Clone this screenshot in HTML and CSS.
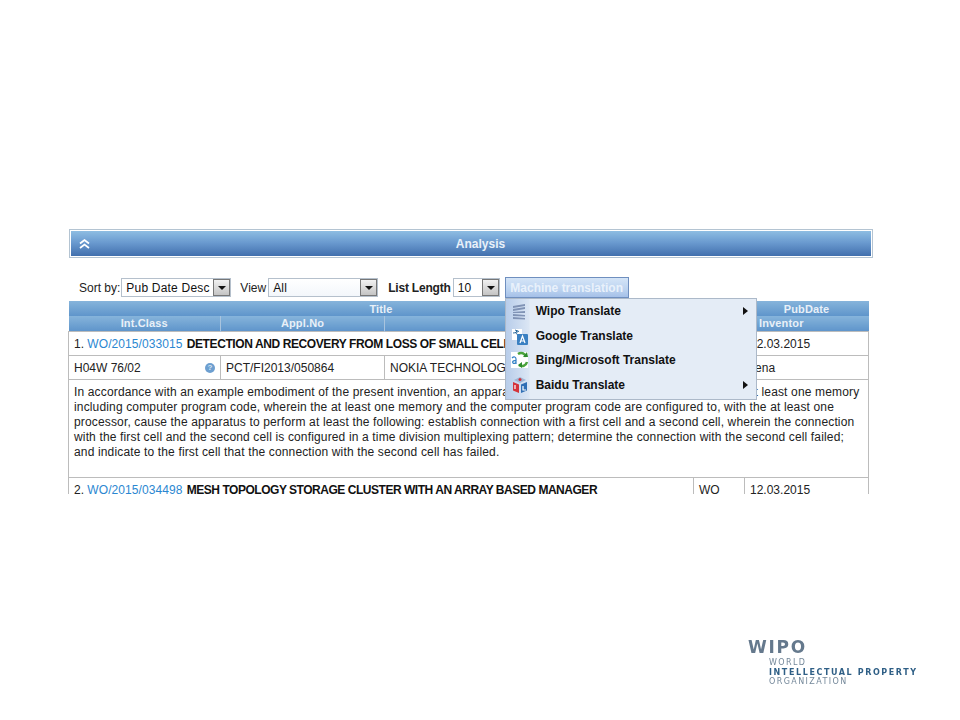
FILE: index.html
```html
<!DOCTYPE html>
<html lang="en">
<head>
<meta charset="utf-8">
<title>Analysis</title>
<link rel="stylesheet" href="styles.css">
</head>
<body>
<div class="slide">
  <section class="panel">
    <div class="panel-bar">
      <svg class="chev" width="11" height="10" viewBox="0 0 11 10"><path d="M1 4.500 5.500 1 10 4.500M1 9 5.500 5.500 10 9" fill="none" stroke="#fff" stroke-width="1.700"/></svg>
      <span class="panel-title">Analysis</span>
    </div>
  </section>

  <div class="toolbar">
    <label class="tool-label">Sort by:</label>
    <span class="select sel-sort"><span class="sel-text">Pub Date Desc</span><span class="sel-btn"></span></span>
    <label class="tool-label view-label">View</label>
    <span class="select sel-view"><span class="sel-text">All</span><span class="sel-btn"></span></span>
    <label class="tool-label bold len-label">List Length</label>
    <span class="select sel-len"><span class="sel-text">10</span><span class="sel-btn"></span></span>
    <div class="mt-wrap">
      <button class="mt-btn">Machine translation</button>
      <ul class="menu">
        <li class="menu-item">
          <svg class="mi" width="20" height="20" viewBox="0 0 20 20"><path d="M3 5 15 3v2L3 7zM3 8l12-2v2L3 10zM3 11l12-1v2H3zM3 13l12 1v1.500L3 15zM3 16l12 1v1.500L3 18z" fill="#8093b5"/></svg>
          <span class="mi-text">Wipo Translate</span><span class="arrow"></span>
        </li>
        <li class="menu-item">
          <svg class="mi" width="20" height="20" viewBox="0 0 20 20"><rect x="2" y="3" width="10" height="11" fill="#fff"/><path d="M5 4l3 1M6.500 4v2M3 7c2 0 5-1 6-2M5 6c1 2 3 3 5 3" fill="none" stroke="#2c6a9c"/><rect x="7" y="8" width="11" height="11" rx="1" fill="#3a80c2"/><path d="M10 17l2.500-7 2.500 7M11 15h3" fill="none" stroke="#fff" stroke-width="1.200"/></svg>
          <span class="mi-text">Google Translate</span>
        </li>
        <li class="menu-item">
          <svg class="mi" width="20" height="20" viewBox="0 0 20 20"><rect x="1" y="2" width="17" height="16" fill="#fff"/><path d="M8 4c3-2 7-1 8 3" fill="none" stroke="#4aa33d" stroke-width="2.500"/><path d="M17 12c-1 4-5 5-8 3" fill="none" stroke="#4aa33d" stroke-width="2.500"/><path d="M13 7h5l-1-5zM12 12l-4 3 4 3z" fill="#2e8b2e"/><path d="M2 8c2-2 4-1 4 1v5M6 11c-3-1-4 1-3 2s3 0 3-1" fill="none" stroke="#2f7fc6" stroke-width="1.200"/></svg>
          <span class="mi-text">Bing/Microsoft Translate</span>
        </li>
        <li class="menu-item">
          <svg class="mi" width="20" height="20" viewBox="0 0 20 20"><path d="M10 2 16 5 10 8 4 5z" fill="#9fb7d6"/><path d="M3 7l6 2.500V18l-6-2.500z" fill="#d4333a"/><path d="M17 7l-6 2.500V18l6-2.500z" fill="#2f6fb5"/><circle cx="10" cy="4.500" r="1.500" fill="#d4333a"/><path d="M5 10v4M13 11v4h3" fill="none" stroke="#fff" stroke-width="1.200"/></svg>
          <span class="mi-text">Baidu Translate</span><span class="arrow"></span>
        </li>
      </ul>
    </div>
  </div>

  <div class="results">
    <table class="grid">
      <colgroup>
        <col class="c1"><col class="c2"><col class="c3"><col class="c4"><col class="c5">
      </colgroup>
      <thead>
        <tr class="head-a">
          <th colspan="3">Title</th><th>Ctr</th><th>PubDate</th>
        </tr>
        <tr class="head-b">
          <th>Int.Class</th><th>Appl.No</th><th>Applicant</th><th colspan="2">Inventor</th>
        </tr>
      </thead>
      <tbody>
        <tr class="row">
          <td colspan="3">1. <a href="#">WO/2015/033015</a> <b class="t1">DETECTION AND RECOVERY FROM LOSS OF SMALL CELL</b></td>
          <td>WO</td><td>12.03.2015</td>
        </tr>
        <tr class="row">
          <td><span class="cls">H04W 76/02<i class="help">?</i></span></td>
          <td>PCT/FI2013/050864</td>
          <td>NOKIA TECHNOLOGIES OY</td>
          <td colspan="2">Koskela, Lena</td>
        </tr>
        <tr class="abstract">
          <td colspan="5">In accordance with an example embodiment of the present invention, an apparatus comprising: at least one processor; and at least one memory including computer program code, wherein the at least one memory and the computer program code are configured to, with the at least one processor, cause the apparatus to perform at least the following: establish connection with a first cell and a second cell, wherein the connection with the first cell and the second cell is configured in a time division multiplexing pattern; determine the connection with the second cell failed; and indicate to the first cell that the connection with the second cell has failed.</td>
        </tr>
        <tr class="row">
          <td colspan="3">2. <a href="#">WO/2015/034498</a> <b class="t2">MESH TOPOLOGY STORAGE CLUSTER WITH AN ARRAY BASED MANAGER</b></td>
          <td>WO</td><td>12.03.2015</td>
        </tr>
      </tbody>
    </table>
  </div>

  <footer class="brand">
    <div class="brand-big">WIPO</div>
    <div class="brand-lines">
      <div>WORLD</div>
      <div class="strong">INTELLECTUAL PROPERTY</div>
      <div>ORGANIZATION</div>
    </div>
  </footer>
</div>
</body>
</html>
```

FILE: styles.css
```css
* { box-sizing: border-box; }
html, body { margin: 0; padding: 0; background: #fff; }
body { font-family: "Liberation Sans", Arial, sans-serif; font-size: 12px; color: #111; }

.slide { width: 960px; height: 720px; padding-top: 229px; overflow: hidden; }

.panel { width: 804px; height: 29px; margin-left: 69px; padding: 1px; border: 1px solid #b4c4d2; }
.panel-bar {
  height: 100%; display: flex; align-items: center;
  color: #e9f1f9; font-weight: bold; font-size: 12px;
  background: linear-gradient(#8ebde2, #6b9bd0 45%, #4270ae);
}
.chev { margin-left: 8px; flex: none; }
.panel-title { flex: 1; text-align: center; }

.toolbar { display: flex; align-items: center; height: 21px; margin: 19px 0 0 79px; }
.tool-label { color: #222; }
.bold { font-weight: bold; letter-spacing: -0.2px; }
.view-label { margin-left: 9px; margin-right: 2px; }
.len-label { margin-left: 10px; margin-right: 2px; }
.select {
  display: flex; align-items: center; justify-content: space-between; height: 19px;
  border: 1px solid #b5c0cc; background: #fff; padding: 0 0 0 4px;
}
.sel-text { letter-spacing: 0.2px; }
.sel-sort { width: 110px; margin-left: 1px; }
.sel-view { width: 110px; background: linear-gradient(#fff, #f3f7fb); }
.sel-len { width: 47px; }
.sel-btn {
  width: 17px; height: 17px; position: relative; flex: none;
  background: linear-gradient(#f1f1f1, #c4c4c4); border: 1px solid #777;
}
.sel-btn::after {
  content: ""; position: absolute; left: 4px; top: 6px;
  border: 4px solid transparent; border-top: 4px solid #111; border-bottom: 0;
}

.mt-wrap { position: relative; margin-left: 5px; }
.mt-btn {
  display: block; width: 124px; height: 21px; padding: 0; font: bold 12px "Liberation Sans", Arial, sans-serif;
  color: #e9f1fb; border: 1px solid #6f8fbf;
  background: linear-gradient(#d4e4f7, #bcd3f0 60%, #a5c0e8);
}
.menu {
  position: absolute; left: 0; top: 21px; width: 252px; height: 102px; margin: 0; padding: 0;
  list-style: none; border: 1px solid #acb9c9; background: #e4ecf6; z-index: 5;
  background-image: linear-gradient(90deg, #b8cdea, #dbe6f4 23px, transparent 24px);
  background-size: 24px 100%; background-repeat: no-repeat;
}
.menu-item {
  height: 24.500px; display: flex; align-items: center; position: relative;
  font-weight: bold; color: #111; padding-left: 30px;
}
.mi { position: absolute; left: 4px; top: 2px; }
.arrow {
  position: absolute; left: 237px; top: 8px;
  border: 4px solid transparent; border-left: 5px solid #111; border-right: 0;
}

.results { width: 802px; height: 193px; margin: 3px 0 0 68px; overflow: hidden; }
.grid { width: 800px; table-layout: fixed; border-collapse: collapse; }
.c1 { width: 152px; } .c2 { width: 164px; } .c3 { width: 309px; } .c4 { width: 51px; } .c5 { width: 124px; }
.grid th {
  height: 15px; padding: 0; font-size: 11px; font-weight: bold; color: #e8f0f8; text-align: center;
  letter-spacing: 0.15px; background: linear-gradient(#86b4db, #5f95cb);
}
.head-b th { border-left: 1px solid #a9c4de; }
.head-b th:first-child { border-left: 0; }
.grid td { border: 1px solid #bcbcbc; padding: 0 5px; color: #222; white-space: nowrap; overflow: hidden; }
.row td { height: 24px; padding-top: 1px; }
.grid td b { color: #111; margin-left: 1px; }
.t1 { letter-spacing: -0.4px; }
.t2 { letter-spacing: -0.47px; }
.grid a { color: #2b87d1; text-decoration: none; letter-spacing: 0.07px; }
.cls { display: flex; align-items: center; justify-content: space-between; }
.help {
  width: 10px; height: 10px; border-radius: 50%; background: #6d9fd0; color: #d8e6f3;
  font: bold 8px/10px "Liberation Sans", Arial, sans-serif; text-align: center;
}
.abstract td { height: 98px; white-space: normal; vertical-align: top; padding-top: 5px; line-height: 15px; letter-spacing: 0.15px; }

.brand { margin: 144px 0 0 748px; filter: blur(0.3px); }
.brand-big { font: bold 17px/18px "DejaVu Sans", sans-serif; letter-spacing: 1.700px; color: #65798d; }
.brand-lines { margin: 2px 0 0 21px; font: 8px/9.500px "DejaVu Sans", sans-serif; letter-spacing: 1.400px; color: #74889a; white-space: nowrap; }
.brand-lines .strong { font-weight: bold; color: #2f5f86; letter-spacing: 1.600px; }
```
